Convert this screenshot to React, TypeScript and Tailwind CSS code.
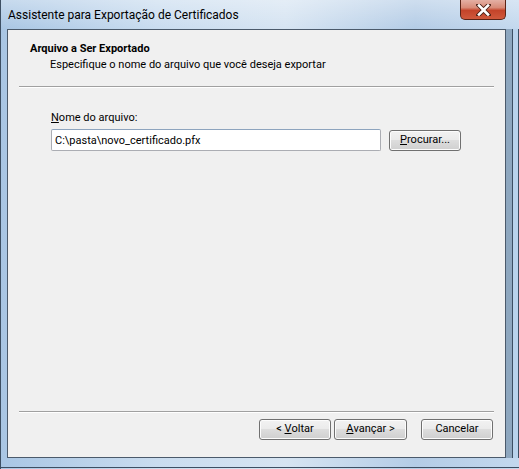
import { useState } from "react";

const btn =
  "h-[21px] rounded-[3px] border border-[#707070] bg-[linear-gradient(#f2f2f2_0%,#ebebeb_45%,#dddddd_50%,#cfcfcf_100%)] text-[11px] text-black flex items-center justify-center shadow-[inset_0_0_0_1px_#fcfcfc]";

export default function App() {
  const [fileName, setFileName] = useState("C:\\pasta\\novo_certificado.pfx");
  return (
    <div
      className="relative w-[519px] h-[469px] flex flex-col overflow-hidden bg-[linear-gradient(90deg,#a9c6e4_0%,#c9dcef_30%,#d6e4f2_55%,#b4cce6_80%,#c3d8ee_100%)] border-l border-[#3d4f63]"
      style={{ fontFamily: 'Roboto, "Noto Sans", sans-serif' }}
    >
      {/* title bar */}
      <div className="h-[29px] shrink-0 flex items-center pl-[7px] text-[12px] text-black bg-[linear-gradient(180deg,rgba(255,255,255,0.35)_0%,rgba(255,255,255,0)_100%)]">
        Assistente para Exportação de Certificados
      </div>
      <button className="absolute top-0 right-[13px] w-[46px] h-[20px] rounded-b-[5px] border border-t-0 border-[#5a2417] bg-[linear-gradient(#e4b0a4_0%,#d88b78_40%,#c4442a_55%,#d0593c_100%)] flex items-center justify-center">
        <svg width="15" height="12" viewBox="0 0 15 12">
          <path d="M2.5 1 L12.5 11 M12.5 1 L2.5 11" stroke="#4a2016" strokeWidth="4.4" strokeLinecap="square" />
          <path d="M3 1.5 L12 10.5 M12 1.5 L3 10.5" stroke="#ffffff" strokeWidth="2.6" strokeLinecap="square" />
        </svg>
      </button>

      <div className="flex flex-1 min-h-0">
        <div className="w-[6px] shrink-0" />
        {/* dialog panel */}
        <div className="w-[499px] h-[429px] border border-[#4b5a6b] bg-[#f0f0f0] flex flex-col text-[11px] text-black">
          <div className="pl-[22px] pt-[11px] h-[56px]">
            <div className="font-bold leading-[16px]">Arquivo a Ser Exportado</div>
            <div className="pl-[20px] leading-[16px]">Especifique o nome do arquivo que você deseja exportar</div>
          </div>
          <div className="mx-[11px] h-[2px] border-t border-[#a0a0a0] border-b border-b-white" />

          <div className="pl-[43px] pt-[22px] flex-1">
            <div className="leading-[16px]">
              <span className="underline">N</span>ome do arquivo:
            </div>
            <div className="flex items-center mt-[3px]">
              <input
                value={fileName}
                onChange={(e) => setFileName(e.target.value)}
                className="w-[330px] h-[22px] px-[3px] border border-[#abadb3] border-t-[#8da4be] rounded-[2px] bg-white text-[11px] outline-none"
              />
              <button className={`${btn} ml-[8px] w-[72px] h-[20px]`}>
                <span className="underline">P</span>rocurar...
              </button>
            </div>
          </div>

          <div className="mx-[11px] h-[2px] border-t border-[#a0a0a0] border-b border-b-white" />
          <div className="flex justify-end items-start pt-[6px] pr-[12px] h-[44px] gap-[3px]">
            <button className={`${btn} w-[72px]`}>
              &lt;&nbsp;<span className="underline">V</span>oltar
            </button>
            <button className={`${btn} w-[73px] border-[#3c7fb1] bg-[linear-gradient(#eaf6fd_0%,#d9f0fc_45%,#bee6fd_50%,#a7d9f5_100%)]`}>
              <span className="underline">A</span>vançar &gt;
            </button>
            <button className={`${btn} w-[72px] ml-[11px]`}>Cancelar</button>
          </div>
        </div>
        <div className="w-[13px] shrink-0 flex">
          <div className="w-[6px] bg-[#8ea7bf]" />
          <div className="w-[1px] bg-[#3d4f63]" />
          <div className="w-[5px] bg-[#b9d3ec]" />
          <div className="w-[1px] bg-[#3d4f63]" />
        </div>
      </div>
      <div className="h-[11px] shrink-0 flex flex-col">
        <div className="h-[9px]" />
        <div className="h-[1px] bg-[#3d4f63]" />
      </div>
    </div>
  );
}
